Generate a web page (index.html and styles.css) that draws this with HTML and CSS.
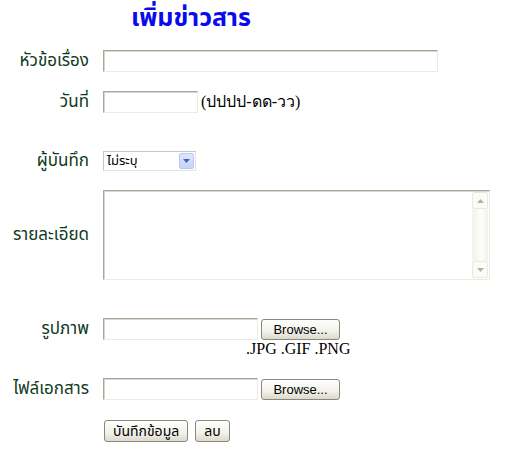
FILE: index.html
```html
<!DOCTYPE html>
<html lang="th">
<head>
<meta charset="utf-8">
<title>เพิ่มข่าวสาร</title>
<link rel="stylesheet" href="styles.css">
</head>
<body>
<div class="page">
  <h1 class="title">เพิ่มข่าวสาร</h1>
  <form class="form">
    <div class="row r-subject">
      <label class="label">หัวข้อเรื่อง</label>
      <div class="field"><input class="text w-subject" type="text"></div>
    </div>
    <div class="row r-date">
      <label class="label">วันที่</label>
      <div class="field"><input class="text w-date" type="text"><span class="hint">(ปปปป-ดด-วว)</span></div>
    </div>
    <div class="row r-author">
      <label class="label">ผู้บันทึก</label>
      <div class="field">
        <div class="select">
          <span class="select-value">ไม่ระบุ</span>
          <span class="select-btn"><svg width="7" height="4" viewBox="0 0 7 4"><path d="M0 0H7L3.5 4Z" fill="#4d61a8"/></svg></span>
        </div>
      </div>
    </div>
    <div class="row r-detail">
      <label class="label">รายละเอียด</label>
      <div class="field">
        <div class="textarea">
          <div class="ta-body"></div>
          <div class="scroll">
            <span class="sb-btn"><svg width="7" height="4" viewBox="0 0 7 4"><path d="M3.5 0L7 4H0Z" fill="#b4b2a8"/></svg></span>
            <span class="sb-track"></span>
            <span class="sb-btn"><svg width="7" height="4" viewBox="0 0 7 4"><path d="M0 0H7L3.5 4Z" fill="#b4b2a8"/></svg></span>
          </div>
        </div>
      </div>
    </div>
    <div class="row r-image">
      <label class="label">รูปภาพ</label>
      <div class="field col">
        <div class="file"><input class="text w-file" type="text"><button class="btn browse" type="button">Browse...</button></div>
        <span class="ext">.JPG .GIF .PNG</span>
      </div>
    </div>
    <div class="row r-doc">
      <label class="label">ไฟล์เอกสาร</label>
      <div class="field">
        <div class="file"><input class="text w-file" type="text"><button class="btn browse" type="button">Browse...</button></div>
      </div>
    </div>
    <div class="row r-actions">
      <span class="label"></span>
      <div class="field actions">
        <button class="btn thai" type="button">บันทึกข้อมูล</button>
        <button class="btn thai" type="button">ลบ</button>
      </div>
    </div>
  </form>
</div>
</body>
</html>
```
FILE: styles.css
```css
html, body {
  margin: 0;
  padding: 0;
  background: #ffffff;
}
.page {
  padding-top: 3px;
  font-family: "Tahoma", "Noto Sans Thai", "Noto Sans", sans-serif;
}
.title {
  margin: 0 0 0 131px;
  height: 31px;
  font-size: 25px;
  font-weight: bold;
  color: #0a0aee;
  line-height: 31px;
}
.form {
  display: flex;
  flex-direction: column;
}
.row {
  display: flex;
  align-items: center;
}
.label {
  width: 89px;
  flex: none;
  text-align: right;
  color: #0f3a22;
  font-size: 17px;
  line-height: 22px;
  height: 22px;
  margin-right: 14px;
  white-space: nowrap;
}
.field {
  display: flex;
  align-items: center;
}
.field.col {
  flex-direction: column;
  align-items: flex-start;
}
.r-subject { margin-top: 16px; height: 22px; }
.r-date { margin-top: 19px; height: 22px; }
.r-author { margin-top: 38px; height: 20px; }
.r-detail { margin-top: 19px; height: 90px; }
.r-image { margin-top: 38px; align-items: flex-start; }
.r-doc { margin-top: 20px; height: 22px; }
.r-actions { margin-top: 20px; height: 22px; }

.text {
  box-sizing: border-box;
  height: 22px;
  margin: 0;
  padding: 0 2px;
  border: 1px solid;
  border-color: #a8a79c #ecebe2 #ecebe2 #a8a79c;
  box-shadow: inset 1px 1px 0 #d8d6cc;
  background: #fff;
  outline: none;
}
.w-subject { width: 335px; }
.w-date { width: 95px; }
.w-file { width: 155px; }
.hint {
  margin-left: 3px;
  font-family: "Liberation Serif", serif;
  font-size: 16px;
  line-height: 22px;
  color: #000;
}
.select {
  box-sizing: border-box;
  width: 93px;
  height: 20px;
  border: 1px solid;
  border-color: #c9c7bc #e6e4da #e6e4da #c9c7bc;
  display: flex;
  align-items: center;
  justify-content: space-between;
  padding: 0 1px 0 3px;
  background: #fff;
}
.select-value {
  font-size: 13px;
  line-height: 16px;
  color: #000;
}
.select-btn {
  box-sizing: border-box;
  width: 15px;
  height: 16px;
  border: 1px solid #b7c8f2;
  border-radius: 2px;
  background: linear-gradient(#dfe8fd, #c3d3fb);
  display: flex;
  align-items: center;
  justify-content: center;
}
.textarea {
  box-sizing: border-box;
  width: 387px;
  height: 90px;
  border: 1px solid;
  border-color: #a8a79c #ecebe2 #ecebe2 #a8a79c;
  box-shadow: inset 1px 1px 0 #d8d6cc;
  display: flex;
  background: #fff;
}
.ta-body { flex: 1; }
.scroll {
  width: 17px;
  display: flex;
  flex-direction: column;
  padding: 1px 1px 1px 0;
  box-sizing: border-box;
}
.sb-btn {
  box-sizing: border-box;
  height: 17px;
  border: 1px solid #ebe9df;
  border-radius: 2px;
  background: #fbfbf8;
  display: flex;
  align-items: center;
  justify-content: center;
}
.sb-track {
  flex: 1;
  background: linear-gradient(90deg, #f3f2ec, #fdfdfb 60%, #f1f0ea);
}
.file {
  display: flex;
  align-items: center;
  height: 22px;
}
.btn {
  box-sizing: border-box;
  margin: 0;
  border: 1px solid #8a887e;
  border-radius: 3px;
  background: linear-gradient(#fefefd, #f2f1ea 60%, #dcd9cc);
  color: #000;
  padding: 0;
}
.browse {
  width: 79px;
  height: 21px;
  margin-left: 3px;
  font-family: "Liberation Sans", Arial, sans-serif;
  font-size: 13px;
}
.ext {
  margin: 0 0 0 143px;
  font-family: "Liberation Serif", serif;
  font-size: 16px;
  line-height: 18px;
  color: #000;
}
.actions {
  gap: 7px;
  padding-left: 1px;
}
.thai {
  height: 22px;
  font-family: "Tahoma", "Noto Sans Thai", sans-serif;
  font-size: 14px;
  padding: 0 8px;
}
```
